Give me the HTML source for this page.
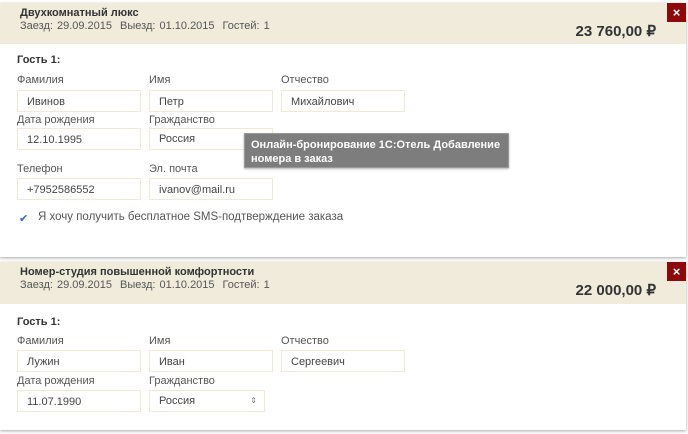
<!DOCTYPE html>
<html><head><meta charset="utf-8"><style>
*{box-sizing:border-box;margin:0;padding:0}
body{width:688px;height:434px;background:#fff;font-family:"Liberation Sans",Arial,sans-serif;position:relative;overflow:hidden;color:#333}
.card{position:absolute;left:0;width:686px;background:#fff;box-shadow:0 1px 3px rgba(0,0,0,.35)}
.hd{position:absolute;left:0;top:0;width:100%;height:41px;background:#f1ebdc}
.t{position:absolute;left:20px;top:4px;font-size:11px;font-weight:bold;color:#333}
.s{position:absolute;left:20px;top:17px;font-size:11px;color:#555;word-spacing:1px}
.s span{margin-right:8px}
.pr{position:absolute;right:30px;top:19px;font-size:15px;font-weight:bold;color:#333}
.x{position:absolute;right:0;top:0;width:19px;height:19px;background:#8e0a0a;color:#fff;font-size:13px;font-weight:bold;text-align:center;line-height:19px}
.a{position:absolute;font-size:11px;color:#555}
.g{position:absolute;left:17px;font-size:11px;font-weight:bold;color:#333}
.i{position:absolute;width:124px;height:22px;border:1px solid #efe9d8;font-size:11px;color:#444;padding:5px 0 0 9px;background:#fff}
.tip{position:absolute;left:244px;top:133px;width:265px;height:35px;background:#7d7d7d;border:1px solid #999;color:#fff;font-size:11px;font-weight:bold;padding:4px 6px;line-height:14px;box-shadow:0 1px 2px rgba(0,0,0,.3)}
</style></head><body>
<div class="card" style="top:3px;height:254px">
<div class="hd"><div class="t">Двухкомнатный люкс</div><div class="s"><span>Заезд: 29.09.2015</span><span>Выезд: 01.10.2015</span><span>Гостей: 1</span></div><div class="pr">23 760,00 ₽</div><div class="x">×</div></div>
</div>
<div class="g" style="top:54px">Гость 1:</div>
<div class="a" style="left:17px;top:74px">Фамилия</div><div class="a" style="left:149px;top:74px">Имя</div><div class="a" style="left:281px;top:74px">Отчество</div>
<div class="i" style="left:17px;top:90px">Ивинов</div><div class="i" style="left:149px;top:90px">Петр</div><div class="i" style="left:281px;top:90px">Михайлович</div>
<div class="a" style="left:17px;top:114px">Дата рождения</div><div class="a" style="left:149px;top:114px">Гражданство</div>
<div class="i" style="left:17px;top:128px">12.10.1995</div><div class="i" style="left:149px;top:128px;padding-top:4px">Россия</div>
<div class="a" style="left:17px;top:163px">Телефон</div><div class="a" style="left:149px;top:163px">Эл. почта</div>
<div class="i" style="left:17px;top:178px">+7952586552</div><div class="i" style="left:149px;top:178px">ivanov@mail.ru</div>
<div class="a" style="left:19px;top:212px;color:#2a6ab0;font-size:11px">✔</div>
<div class="a" style="left:38px;top:211px;font-size:11.5px">Я хочу получить бесплатное SMS-подтверждение заказа</div>
<div class="tip">Онлайн-бронирование 1С:Отель Добавление номера в заказ</div>

<div class="card" style="top:262px;height:168px">
<div class="hd" style="height:42px"><div class="t">Номер-студия повышенной комфортности</div><div class="s"><span>Заезд: 29.09.2015</span><span>Выезд: 01.10.2015</span><span>Гостей: 1</span></div><div class="pr">22 000,00 ₽</div><div class="x">×</div></div>
</div>
<div class="g" style="top:316px">Гость 1:</div>
<div class="a" style="left:17px;top:335px">Фамилия</div><div class="a" style="left:149px;top:335px">Имя</div><div class="a" style="left:281px;top:335px">Отчество</div>
<div class="i" style="left:17px;top:350px">Лужин</div><div class="i" style="left:149px;top:350px">Иван</div><div class="i" style="left:281px;top:350px">Сергеевич</div>
<div class="a" style="left:17px;top:375px">Дата рождения</div><div class="a" style="left:149px;top:375px">Гражданство</div>
<div class="i" style="left:17px;top:390px">11.07.1990</div><div class="i" style="left:149px;top:390px;width:116px;padding-top:4px">Россия<span style="position:absolute;right:7px;top:5px;font-size:8px;color:#777">⇕</span></div>
</body></html>
